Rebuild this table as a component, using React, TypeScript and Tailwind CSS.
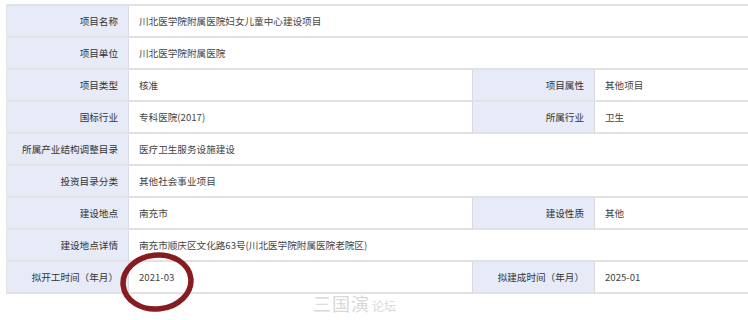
import type { ReactNode } from "react";

type Row = { label: string; value: ReactNode; label2?: string; value2?: string };

const rows: Row[] = [
  { label: "项目名称", value: "川北医学院附属医院妇女儿童中心建设项目" },
  { label: "项目单位", value: "川北医学院附属医院" },
  { label: "项目类型", value: "核准", label2: "项目属性", value2: "其他项目" },
  { label: "国标行业", value: "专科医院(2017)", label2: "所属行业", value2: "卫生" },
  { label: "所属产业结构调整目录", value: "医疗卫生服务设施建设" },
  { label: "投资目录分类", value: "其他社会事业项目" },
  { label: "建设地点", value: "南充市", label2: "建设性质", value2: "其他" },
  { label: "建设地点详情", value: "南充市顺庆区文化路63号(川北医学院附属医院老院区)" },
  { label: "拟开工时间（年月）", value: "2021-03", label2: "拟建成时间（年月）", value2: "2025-01" },
];

const labelCell =
  "flex items-center justify-end bg-[#e7eaf7] pr-[10px] text-[#333] border-r border-[#d6d9e8]";
const valueCell = "flex items-center pl-[10px] text-[#444]";

export default function App() {
  return (
    <div
      className="relative h-[320px] w-[748px] overflow-hidden bg-white"
      style={{ fontFamily: '"Noto Sans CJK SC", "Noto Sans", sans-serif' }}
    >
      <div className="ml-[6px] mt-[4px] w-[760px] border-t-2 border-l border-[#e2e2e2] text-[9.6px]">
        {rows.map((r) => (
          <div
            key={r.label}
            className="grid h-[32px] grid-cols-[122px_343px_123px_1fr] border-b-2 border-[#e2e2e2]"
          >
            <div className={labelCell}>{r.label}</div>
            {r.label2 ? (
              <>
                <div className={valueCell}>{r.value}</div>
                <div className={labelCell + " border-l"}>{r.label2}</div>
                <div className={valueCell}>{r.value2}</div>
              </>
            ) : (
              <div className={valueCell + " col-span-3"}>{r.value}</div>
            )}
          </div>
        ))}
      </div>

      {/* hand-drawn circle around the start date */}
      <svg
        className="absolute left-[116px] top-[249px]"
        width="82"
        height="68"
        viewBox="0 0 82 68"
      >
        <ellipse
          cx="41"
          cy="33"
          rx="34"
          ry="27"
          transform="rotate(-6 41 33)"
          fill="none"
          stroke="#861b20"
          strokeWidth="5.5"
        />
      </svg>

      {/* watermark */}
      <div className="absolute left-[313px] top-[294px] flex items-end gap-[2px] text-[#d9d9d9]">
        <span className="text-[18px] leading-none tracking-[1px]">三国演</span>
        <span className="text-[12px] leading-none">论坛</span>
      </div>
    </div>
  );
}
